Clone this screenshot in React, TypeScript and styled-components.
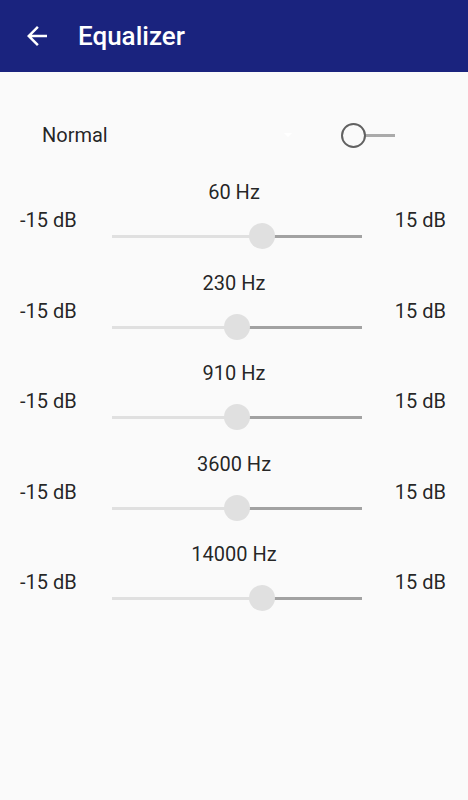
import React from "react";
import styled, { createGlobalStyle } from "styled-components";

const GlobalStyle = createGlobalStyle`
  body {
    margin: 0;
    background: #fafafa;
    font-family: Roboto, "Noto Sans", sans-serif;
  }
`;

const StyledPage = styled.div`
  min-height: 800px;
  background: #fafafa;
`;

const StyledAppBar = styled.header`
  height: 72px;
  background: #1a237e;
  display: flex;
  align-items: center;
  padding-left: 22px;
`;

const StyledBackBtn = styled.button`
  width: 30px;
  height: 30px;
  padding: 0;
  border: none;
  background: transparent;
  display: flex;
  align-items: center;
  justify-content: center;
`;

const StyledTitle = styled.h1`
  margin: 0 0 0 26px;
  color: #ffffff;
  font-size: 26px;
  font-weight: 500;
  line-height: 30px;
`;

const StyledPresetRow = styled.div`
  margin-top: 39px;
  height: 48px;
  display: flex;
  align-items: center;
  padding: 0 73px 0 42px;
`;

const StyledPresetName = styled.span`
  flex: 1;
  font-size: 20px;
  color: rgba(0, 0, 0, 0.87);
`;

const StyledSpinnerArrow = styled.span`
  width: 0;
  height: 0;
  border-left: 4px solid transparent;
  border-right: 4px solid transparent;
  border-top: 4px solid #ffffff;
  margin-right: 49px;
`;

const StyledSwitch = styled.div`
  position: relative;
  width: 54px;
  height: 25px;
`;

const StyledSwitchTrack = styled.div`
  position: absolute;
  left: 24px;
  right: 0;
  top: 11px;
  height: 3px;
  background: #aaaaaa;
`;

const StyledSwitchThumb = styled.div`
  position: absolute;
  left: 0;
  top: 0;
  width: 21px;
  height: 21px;
  border: 2px solid #616161;
  border-radius: 50%;
  background: #fafafa;
`;

const StyledBand = styled.div`
  box-sizing: border-box;
  height: 90.5px;
  padding: 21px 22px 0 20px;
  display: grid;
  grid-template-columns: 92px 250px 1fr;
  grid-template-rows: 24px auto;
  grid-template-areas:
    "hz hz hz"
    "min track max";
  row-gap: 4px;
  align-items: start;
`;

const StyledHz = styled.div`
  grid-area: hz;
  text-align: center;
  font-size: 20px;
  line-height: 24px;
  color: rgba(0, 0, 0, 0.87);
  padding-left: 2px;
`;

const StyledDb = styled.div<{ $side: "min" | "max" }>`
  grid-area: ${(p) => p.$side};
  text-align: ${(p) => (p.$side === "min" ? "left" : "right")};
  font-size: 20px;
  line-height: 24px;
  color: rgba(0, 0, 0, 0.87);
`;

const StyledSlider = styled.div`
  grid-area: track;
  position: relative;
  margin-top: 15px;
  height: 26px;
`;

const StyledTrack = styled.div`
  position: absolute;
  left: 0;
  right: 0;
  top: 12px;
  height: 3px;
  background: #a2a2a2;
`;

const StyledTrackFill = styled.div`
  height: 100%;
  background: #e0e0e0;
`;

const StyledThumb = styled.div`
  position: absolute;
  top: 0;
  width: 26px;
  height: 26px;
  margin-left: -13px;
  border-radius: 50%;
  background: #e0e0e0;
`;

const bands = [
  { hz: "60 Hz", value: 0.6 },
  { hz: "230 Hz", value: 0.5 },
  { hz: "910 Hz", value: 0.5 },
  { hz: "3600 Hz", value: 0.5 },
  { hz: "14000 Hz", value: 0.6 },
];

const ArrowBack = () => (
  <svg width="30" height="30" viewBox="0 0 24 24" fill="#ffffff">
    <path d="M20 11H7.83l5.59-5.59L12 4l-8 8 8 8 1.41-1.41L7.83 13H20v-2z" />
  </svg>
);

export default function App() {
  return (
    <StyledPage>
      <GlobalStyle />
      <StyledAppBar>
        <StyledBackBtn aria-label="Back">
          <ArrowBack />
        </StyledBackBtn>
        <StyledTitle>Equalizer</StyledTitle>
      </StyledAppBar>
      <StyledPresetRow>
        <StyledPresetName>Normal</StyledPresetName>
        <StyledSpinnerArrow />
        <StyledSwitch>
          <StyledSwitchTrack />
          <StyledSwitchThumb />
        </StyledSwitch>
      </StyledPresetRow>
      {bands.map((b) => (
        <StyledBand key={b.hz}>
          <StyledHz>{b.hz}</StyledHz>
          <StyledDb $side="min">-15 dB</StyledDb>
          <StyledSlider>
            <StyledTrack>
              <StyledTrackFill style={{ width: `${b.value * 100}%` }} />
            </StyledTrack>
            <StyledThumb style={{ left: `${b.value * 100}%` }} />
          </StyledSlider>
          <StyledDb $side="max">15 dB</StyledDb>
        </StyledBand>
      ))}
    </StyledPage>
  );
}
